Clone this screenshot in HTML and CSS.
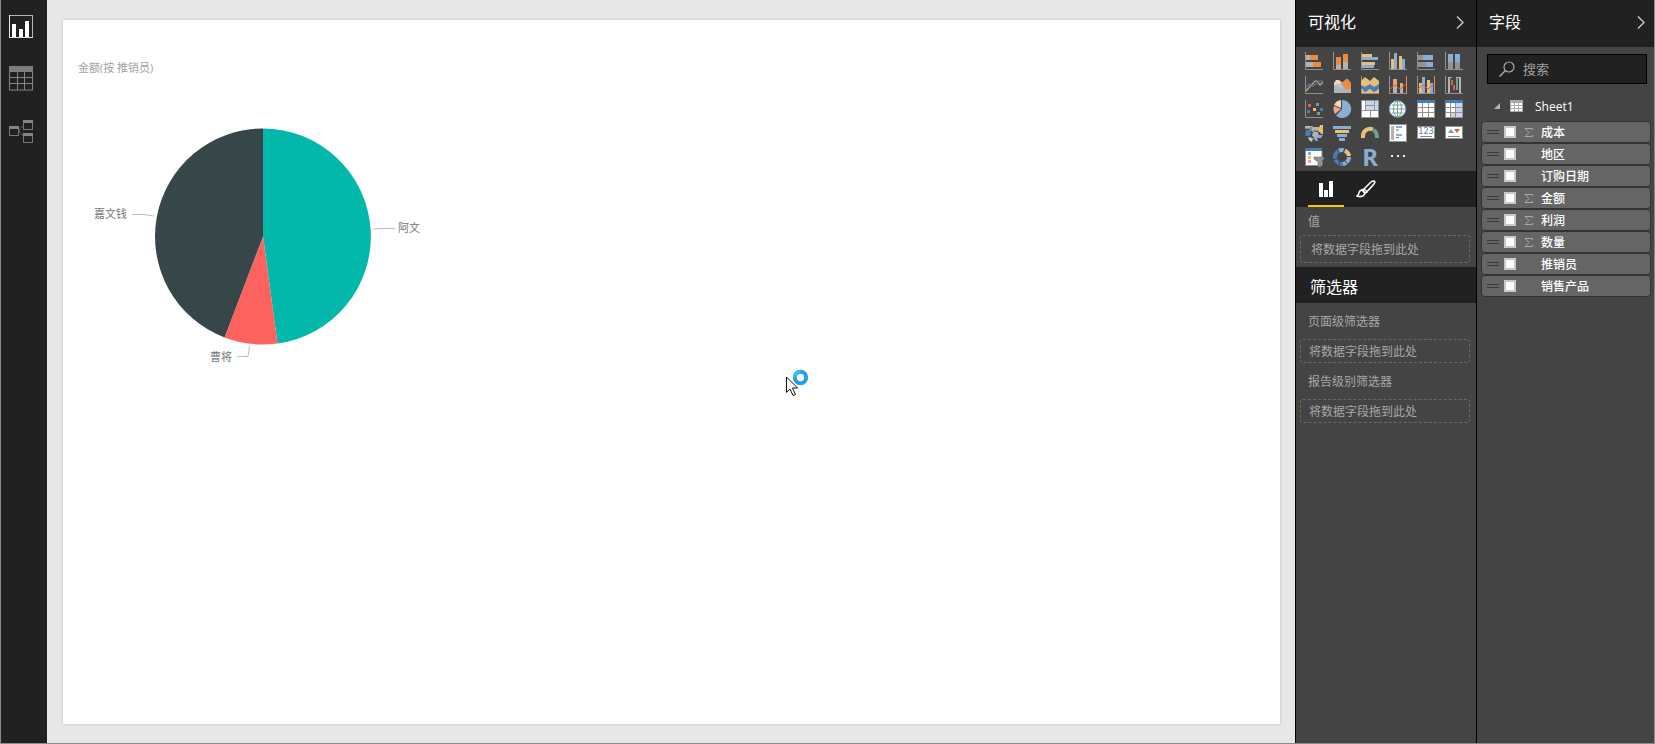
FILE: index.html
```html
<!DOCTYPE html>
<html lang="zh-CN">
<head>
<meta charset="utf-8">
<title>Sheet1</title>
<link rel="stylesheet" href="styles.css">
</head>
<body>
<div class="app">
  <nav class="rail">
    <button class="rail-btn" aria-label="报表"><svg width="24" height="24" viewBox="0 0 24 24"><rect x="0.5" y="1.500" width="23" height="22" fill="none" stroke="#b4b4b4"/><path d="M.5 1V23.500H24" fill="none" stroke="#e6e6e6"/><path d="M3 10h4v13H3zM10 15h4v8h-4zM16 7h4v16h-4z" fill="#fff"/></svg></button>
    <button class="rail-btn" aria-label="数据"><svg width="24" height="26" viewBox="0 0 24 26"><path d="M0 1h24v6H0z" fill="#7d7d7d"/><path d="M.5 7v18M8.500 7v18M15.500 7v18M23.500 7v18M0 12.500h24M0 18.500h24M0 25h24" stroke="#858585" fill="none"/></svg></button>
    <button class="rail-btn" aria-label="关系"><svg width="24" height="26" viewBox="0 -1 24 26"><g fill="none" stroke="#777"><rect x=".5" y="7.500" width="9" height="9"/><rect x="14.500" y="1.500" width="9" height="9"/><rect x="14.500" y="14.500" width="9" height="9"/><path d="M10 11l4-4M10 12l4 5" stroke-dasharray="2 1"/></g><path d="M0 7h10v3H0zM14 1h10v3H14zM14 14h10v3H14z" fill="#858585"/></svg></button>
  </nav>

  <main class="canvas">
    <section class="page">
      <h1 class="visual-title">金额(按 推销员)</h1>
      <svg class="pie" width="360" height="270" viewBox="0 0 360 270">
        <path d="M185 136.500V28.500A108 108 0 0 1 199.500 243.500Z" fill="#01b8aa"/>
        <path d="M185 136.500L199.500 243.500A108 108 0 0 1 146.500 237.400Z" fill="#fd625e"/>
        <path d="M185 136.500L146.500 237.400A108 108 0 0 1 185 28.500Z" fill="#374649"/>
        <path d="M54 114.500H66L76 116M295 129L305 128.500H317M171.500 246L170 256.500H159" fill="none" stroke="#bdbdbd"/>
        <text x="16" y="118">嘉文钱</text>
        <text x="320" y="132">阿文</text>
        <text x="132" y="261">曹将</text>
      </svg>
    </section>
    <svg class="cursor" width="26" height="32" viewBox="0 0 26 32"><circle cx="15.500" cy="10.500" r="5.700" fill="none" stroke="#249cf2" stroke-width="4"/><path d="M9.800 10.500A5.700 5.700 0 0 1 15.500 4.800" fill="none" stroke="#35b8fa" stroke-width="4"/><path d="M1.500 10v15.500l3.500-3.500 3 6.500 2.500-1-3-6.500h5z" fill="#fff" stroke="#111"/></svg>
  </main>

  <aside class="panel viz">
    <header class="panel-head"><h2>可视化</h2><button class="chev" aria-label="折叠"><svg width="8" height="14" viewBox="0 0 8 14"><path d="M1 1.500L7 7.500L1 13.500" fill="none" stroke="#d0d0d0" stroke-width="1.300"/></svg></button></header>
    <div class="gallery">
      <button aria-label="堆积条形图"><svg viewBox="0 0 18 18"><path d="M.5 0v17.500H18" class="axis"/><path d="M1 3h4v5H1zM1 10h7v5H1z" fill="#b3b3b3"/><path d="M5 3h8v5H5zM8 10h8v5H8z" fill="#e98c41"/></svg></button>
      <button aria-label="堆积柱形图"><svg viewBox="0 0 18 18"><path d="M.5 0v17.500H18" class="axis"/><path d="M3 13h5v4H3zM10 10h5v7h-5z" fill="#b3b3b3"/><path d="M3 5h5v8H3zM10 2h5v8h-5z" fill="#e98c41"/></svg></button>
      <button aria-label="簇状条形图"><svg viewBox="0 0 18 18"><path d="M.5 0v17.500H18" class="axis"/><path d="M1 2h10v3H1zM1 10h13v3H1z" fill="#e9bf78"/><path d="M1 5h16v3H1zM1 13h12v3H1z" fill="#8badd3"/></svg></button>
      <button aria-label="簇状柱形图"><svg viewBox="0 0 18 18"><path d="M.5 0v17.500H18" class="axis"/><path d="M2 7h3v10H2zM10 4h3v13h-3z" fill="#e9bf78"/><path d="M5 1h3v16H5zM13 7h3v10h-3z" fill="#8badd3"/></svg></button>
      <button aria-label="百分比堆积条形图"><svg viewBox="0 0 18 18"><path d="M.5 0v17.500H18" class="axis"/><path d="M1 3h5v5H1zM1 10h8v5H1z" fill="#929292"/><path d="M6 3h10v5H6zM9 10h7v5H9z" fill="#8badd3"/></svg></button>
      <button aria-label="百分比堆积柱形图"><svg viewBox="0 0 18 18"><path d="M.5 0v17.500H18" class="axis"/><path d="M3 10h5v7H3zM10 10h5v7h-5z" fill="#929292"/><path d="M3 2h5v8H3zM10 2h5v8h-5z" fill="#8badd3"/></svg></button>

      <button aria-label="折线图"><svg viewBox="0 0 18 18"><path d="M.5 0v17.500H18" class="axis"/><path d="M1 15L10 5h2l3 4 3-3" fill="none" stroke="#d9a184" stroke-width="1.200"/><path d="M1 11l3-3 4 2 3-2 3-3h4" fill="none" stroke="#4a7db8" stroke-width="1.200"/></svg></button>
      <button aria-label="分区图"><svg viewBox="0 0 18 18"><path d="M1 7l2-3h3l5 4v6H1z" fill="#f3d8b8"/><path d="M7 8l5-4 1-1h2l3 4v7H8z" fill="#e98c41"/><path d="M1 9l4-1 5 3 3 2h5v4H1z" fill="#b3b3b3"/><path d="M1 10l4-2h3l3 3-4 1z" fill="#a8c8dd"/></svg></button>
      <button aria-label="堆积面积图"><svg viewBox="0 0 18 18"><path d="M.5 0v17.500H18" class="axis"/><path d="M0 5l4-4 5 4 4-4 5 4v9H0z" fill="#e9bf78"/><path d="M0 9l4 2 5-3 4 3 5-3v5l-5 3-4-3-5 3-4-3z" fill="#4a7db8"/><path d="M1 13l3 3 5-3 4 3 5-3v4H1z" fill="#e9bf78"/></svg></button>
      <button aria-label="折线和堆积柱形图"><svg viewBox="0 0 18 18"><path d="M.5 0v17.500H18" class="axis"/><path d="M4 10h4v7H4zM11 12h3v5h-3z" fill="#b3b3b3"/><path d="M4 3h4v7H4zM11 7h3v5h-3z" fill="#e9a56a"/><path d="M17.500 0v17" stroke="#e98c41"/><path d="M1 13l5-4 5 4 6-5" fill="none" stroke="#d8624a"/></svg></button>
      <button aria-label="折线和簇状柱形图"><svg viewBox="0 0 18 18"><path d="M.5 0v17.500H18" class="axis"/><path d="M2 7h3v10H2zM10 4h3v13h-3z" fill="#e9bf78"/><path d="M5 1h3v16H5zM13 7h3v10h-3z" fill="#8badd3"/><path d="M17.500 0v17" stroke="#e98c41"/><path d="M1 13l5-4 5 4 6-5" fill="none" stroke="#d8624a"/></svg></button>
      <button aria-label="瀑布图"><svg viewBox="0 0 18 18"><path d="M.5 0v17.500H18" class="axis"/><path d="M3 1h2v16H3zM14 1h2v16h-2z" fill="#b3b3b3"/><path d="M3 1.500h4M11 1.500h4" stroke="#b3b3b3"/><path d="M6 4h2v5H6zM8 9h2v5H8z" fill="#d8624a"/><path d="M11 2h2v12h-2z" fill="#6f9f8f"/></svg></button>

      <button aria-label="散点图"><svg viewBox="0 0 18 18"><path d="M.5 0v17.500H18" class="axis"/><path d="M3 4h3v3H3z" fill="#d8624a"/><path d="M11 3h3v3h-3z" fill="#6f9f8f"/><path d="M2 10h3v3H2zM15 8h3v3h-3z" fill="#4a7db8"/><path d="M8 8h3v3H8z" fill="#e9bf78"/><path d="M12 12h3v3h-3z" fill="#929292"/></svg></button>
      <button aria-label="饼图"><svg viewBox="0 0 18 18"><path d="M9 9V0a9 9 0 1 1-6 15.500z" fill="#8badd3"/><path d="M8 8V0a9 9 0 0 0-7 5z" fill="#f3d8b8"/><path d="M8 9L1 6a9 9 0 0 0 1 8z" fill="#eda795"/></svg></button>
      <button aria-label="树状图"><svg viewBox="0 0 18 18"><rect x=".5" y=".5" width="17" height="17" fill="#fff" stroke="#929292"/><path d="M5 1h8v4H5zM14 1h3v9h-3zM5 6h8v4H5z" fill="#c8d6e9"/><path d="M4.500 1v10M13.500 1v10M5 5.500h9M1 10.500h16M9.500 11v6" stroke="#929292"/></svg></button>
      <button aria-label="地图"><svg viewBox="0 0 18 18"><circle cx="8.500" cy="9" r="8.300" fill="#fff" stroke="#5f9bc8"/><g fill="none" stroke="#76a394"><ellipse cx="8.500" cy="9" rx="4" ry="8"/><path d="M8.500 1v16M1 9h15M3 5h11M3 13h11"/></g></svg></button>
      <button aria-label="表"><svg viewBox="0 0 18 18"><path d="M0 0h18v18H0z" fill="#929292"/><path d="M0 0h18v3H0z" fill="#4a7db8"/><path d="M1 3h4v4H1zM6 3h5v4H6zM12 3h5v4h-5zM1 8h4v4H1zM6 8h5v4H6zM12 8h5v4h-5zM1 13h4v4H1zM6 13h5v4H6zM12 13h5v4h-5z" fill="#fff"/></svg></button>
      <button aria-label="矩阵"><svg viewBox="0 0 18 18"><path d="M0 0h18v18H0z" fill="#929292"/><path d="M0 0h18v3H0z" fill="#4a7db8"/><path d="M1 3h4v4H1zM6 3h4v4H6zM1 8h4v4H1zM6 8h4v4H6zM1 13h4v4H1z" fill="#fff"/><path d="M11 3h6v4h-6zM11 8h6v4h-6zM6 13h4v4H6zM11 13h6v4h-6z" fill="#c8d6e9"/></svg></button>

      <button aria-label="着色地图"><svg viewBox="0 0 18 18"><path d="M0 2h7l1 1h6v4l-5 1-4-1-1-2H0z" fill="#b3b3b3"/><path d="M15 1h3v9h-2l-1-2h-2l1-4z" fill="#e9bf78"/><path d="M1 6h4l2 4-3 2H0z" fill="#4a7db8"/><path d="M8 8h5l1 4-3 2-4-2z" fill="#b3b3b3"/><path d="M14 11h4l-2 3h-4l1 3h-2l-3-3z" fill="#8badd3"/><path d="M3 13l5 1-1 4-3-2z" fill="#c5c5c5"/><path d="M0 5h5M6 3v9M8 7h6" stroke="#444" stroke-width=".7"/></svg></button>
      <button aria-label="漏斗图"><svg viewBox="0 0 18 18"><path d="M0 2h18v3H0zM4 10h10v3H4zM6 14h6v3H6z" fill="#8badd3"/><path d="M2 6h14v3H2z" fill="#e9bf78"/></svg></button>
      <button aria-label="仪表"><svg viewBox="0 0 18 18"><path d="M2 14v-2a7 7 0 0 1 10-6.500" fill="none" stroke="#e9bf78" stroke-width="4"/><path d="M12.500 6q3.500 2 3.500 8" fill="none" stroke="#6f9f8f" stroke-width="4"/></svg></button>
      <button aria-label="多行卡"><svg viewBox="0 0 18 18"><rect x=".5" y=".5" width="17" height="17" fill="#fff" stroke="#929292"/><path d="M2 2h3v14H2z" fill="#b3b3b3"/><path d="M7 2h6v2H7zM7 10h6v2H7z" fill="#8badd3"/><path d="M7 6h3M7 13.500h3" stroke="#4a7db8"/></svg></button>
      <button aria-label="卡片图"><svg viewBox="0 0 18 18"><rect x=".5" y="2.500" width="17" height="12" fill="#fff" stroke="#929292"/><text x="9" y="10" class="num">123</text><path d="M3 12.500h12" stroke="#888"/></svg></button>
      <button aria-label="KPI"><svg viewBox="0 0 18 18"><rect x=".5" y="2.500" width="17" height="12" fill="#fff" stroke="#929292"/><path d="M3 9l3-4 3 4z" fill="#6f9f8f"/><path d="M9 5h6l-3 4z" fill="#d8624a"/><path d="M3 12.500h12" stroke="#888"/></svg></button>

      <button aria-label="切片器"><svg class="wide" viewBox="0 0 20 19"><path d="M.5 3v14.500H17V3" fill="#fff" stroke="#929292"/><path d="M0 0h17v3H0z" fill="#4a7db8"/><path d="M3 4h3v3H3z" fill="#8badd3"/><path d="M3 8h3v3H3z" fill="#e9bf78"/><path d="M3 12h3v3H3z" fill="#eda795"/><path d="M9 9h10v2l-3 3v5h-3v-5l-4-3z" fill="#929292" stroke="#555" stroke-width=".5"/></svg></button>
      <button aria-label="圆环图"><svg viewBox="0 0 18 18"><g fill="none" stroke-width="4"><circle cx="9" cy="9" r="7" stroke="#4a7db8"/><path d="M12 2.700A7 7 0 0 1 16 8" stroke="#e9bf78"/><path d="M5.500 3A7 7 0 0 1 11 2.300" stroke="#8badd3"/><path d="M16 9A7 7 0 0 1 10 15.900" stroke="#8badd3"/></g><path d="M4 0l3 6M12 0l-2 5M18 8.500h-6M15 16l-4-4M6 17l1-5M0 12l6-2" stroke="#444"/></svg></button>
      <button aria-label="R 脚本视觉对象"><svg viewBox="0 0 18 18"><text x="9" y="18" class="r-mark">R</text></svg></button>
      <button aria-label="更多"><svg viewBox="0 0 18 18"><path d="M2 7h2v2H2zM8 7h2v2H8zM14 7h2v2h-2z" fill="#eee"/></svg></button>
    </div>
    <div class="tabs">
      <button class="tab active" aria-label="字段"><svg width="14" height="16" viewBox="0 0 14 16"><path d="M0 2h4v14H0zM5 9h4v7H5zM10 0h4v16h-4z" fill="#fff"/></svg></button>
      <button class="tab" aria-label="格式"><svg width="20" height="18" viewBox="0 0 20 18"><path d="M8 9L15 2q3-2 4 0-.500 2-8 9.500zM8 9l3 3-2 1-3-3z" fill="none" stroke="#fff" stroke-width="1.500"/><path d="M7 10.500q-3-1-4 2 0 2-2 3.500 6 2 8-2.500z" fill="none" stroke="#fff" stroke-width="1.500"/></svg></button>
    </div>
    <section class="well values"><h3>值</h3><div class="drop">将数据字段拖到此处</div></section>
    <header class="filter-head"><h2>筛选器</h2></header>
    <section class="well"><h3>页面级筛选器</h3><div class="drop">将数据字段拖到此处</div></section>
    <section class="well"><h3>报告级别筛选器</h3><div class="drop">将数据字段拖到此处</div></section>
  </aside>

  <aside class="panel fields">
    <header class="panel-head"><h2>字段</h2><button class="chev" aria-label="折叠"><svg width="8" height="14" viewBox="0 0 8 14"><path d="M1 1.500L7 7.500L1 13.500" fill="none" stroke="#d0d0d0" stroke-width="1.300"/></svg></button></header>
    <label class="search"><svg width="16" height="16" viewBox="0 0 16 16"><circle cx="10" cy="6" r="5" fill="none" stroke="#aaa" stroke-width="1.200"/><path d="M6.500 9.500L.5 15.500" stroke="#aaa" stroke-width="1.400"/></svg><input type="text" placeholder="搜索" aria-label="搜索"></label>
    <div class="table-row"><svg width="6" height="6" viewBox="0 0 6 6"><path d="M6 0v6H0z" fill="#b3b3b3"/></svg><svg class="table-icon" width="13" height="12" viewBox="0 0 13 12"><path d="M0 0h13v12H0z" fill="#aaa"/><path d="M1 3h3v2H1zM5 3h3v2H5zM9 3h3v2H9zM1 6h3v2H1zM5 6h3v2H5zM9 6h3v2H9zM1 9h3v2H1zM5 9h3v2H5zM9 9h3v2H9z" fill="#fff"/></svg><span>Sheet1</span></div>
    <ul class="field-list">
      <li><label><i class="grip"></i><input type="checkbox"><span class="sigma"><svg width="9" height="9" viewBox="0 0 9 9"><path d="M8.500 2V.5H1L5 4.500 1 8.500H8.500V7" class="sum"/></svg></span>成本</label></li>
      <li><label><i class="grip"></i><input type="checkbox"><span class="sigma"></span>地区</label></li>
      <li><label><i class="grip"></i><input type="checkbox"><span class="sigma"></span>订购日期</label></li>
      <li><label><i class="grip"></i><input type="checkbox"><span class="sigma"><svg width="9" height="9" viewBox="0 0 9 9"><path d="M8.500 2V.5H1L5 4.500 1 8.500H8.500V7" class="sum"/></svg></span>金额</label></li>
      <li><label><i class="grip"></i><input type="checkbox"><span class="sigma"><svg width="9" height="9" viewBox="0 0 9 9"><path d="M8.500 2V.5H1L5 4.500 1 8.500H8.500V7" class="sum"/></svg></span>利润</label></li>
      <li><label><i class="grip"></i><input type="checkbox"><span class="sigma"><svg width="9" height="9" viewBox="0 0 9 9"><path d="M8.500 2V.5H1L5 4.500 1 8.500H8.500V7" class="sum"/></svg></span>数量</label></li>
      <li><label><i class="grip"></i><input type="checkbox"><span class="sigma"></span>推销员</label></li>
      <li><label><i class="grip"></i><input type="checkbox"><span class="sigma"></span>销售产品</label></li>
    </ul>
  </aside>
</div>
</body>
</html>
```

FILE: styles.css
```css
* { box-sizing: border-box; }
body {
  margin: 0;
  font-family: "Open Sans", "Noto Sans CJK SC", sans-serif;
  font-size: 12px;
  color: #fff;
}
h1, h2, h3, ul { margin: 0; padding: 0; font-weight: 400; }
button { border: 0; padding: 0; background: none; color: inherit; font: inherit; }
svg { display: block; }

.app {
  display: flex;
  min-height: 100vh;
  background: #e7e7e7;
  border: solid #8c8c8c;
  border-width: 0 1px 1px;
}

.rail {
  flex: none;
  width: 46px;
  padding: 14px 0 0 8px;
  background: #212121;
  display: flex;
  flex-direction: column;
  gap: 27px;
}
.rail-btn { width: 24px; }

.canvas {
  position: relative;
  flex: 1;
  display: flex;
  padding: 20px 15px 19px 16px;
}
.page {
  flex: 1;
  padding: 40px 15px;
  background: #fff;
  box-shadow: 0 0 3px #bbb;
}
.visual-title {
  height: 40px;
  font-size: 11px;
  line-height: 16px;
  color: #a3a3a3;
}
.pie text { font-size: 11px; fill: #777; }
.cursor { position: absolute; left: 738px; top: 367px; }

.panel { flex: none; background: #444; border-left: 1px solid #000; }
.viz { width: 181px; }
.fields { width: 178px; }
.panel-head {
  display: flex;
  align-items: center;
  justify-content: space-between;
  height: 47px;
  padding: 0 12px 3px;
  background: #212121;
}
.fields .panel-head { padding-right: 9px; }
h2 { font-size: 16px; line-height: 24px; }

.gallery {
  display: grid;
  grid-template-columns: repeat(6, 18px);
  gap: 6px 10px;
  padding: 5px 9px;
}
.gallery button { width: 18px; height: 18px; }
.gallery svg { width: 18px; height: 18px; overflow: visible; }
.gallery .wide { width: 20px; height: 19px; }
.axis { fill: none; stroke: #929292; }
.num { font: 400 8px "DejaVu Sans", sans-serif; text-anchor: middle; fill: #4a7db8; }
.r-mark { font: 700 24px "Noto Sans", sans-serif; text-anchor: middle; fill: #8badd3; }

.tabs { display: flex; gap: 4px; height: 36px; padding-left: 12px; background: #212121; }
.tab { width: 36px; padding-top: 2px; display: flex; align-items: center; justify-content: center; border-bottom: 2px solid transparent; }
.tab.active { border-color: #f2c80f; }

.well { padding: 8px 6px 0 4px; color: #a8a8a8; }
.well h3 { padding-left: 8px; font-size: 12px; line-height: 22px; }
.drop {
  margin-top: 6px;
  padding-left: 8px;
  height: 24px;
  line-height: 24px;
  border: 1px dashed #686868;
  border-radius: 3px;
}
.values { padding: 4px 6px 4px 4px; }
.values .drop { margin-top: 2px; height: 28px; line-height: 28px; padding-left: 10px; }
.filter-head { height: 36px; padding: 8px 14px 4px; background: #212121; }

.search {
  display: flex;
  align-items: center;
  gap: 8px;
  height: 30px;
  margin: 7px 7px 0 10px;
  padding-left: 11px;
  background: #212121;
  border: 1px solid #000;
}
.search input {
  flex: 1;
  min-width: 0;
  padding: 0;
  border: 0;
  background: none;
  font: inherit;
  font-size: 13px;
  color: #fff;
}
.search input::placeholder { color: #a0a0a0; opacity: 1; }

.table-row {
  display: flex;
  align-items: center;
  height: 20px;
  margin: 12px 0 5px;
  padding-left: 17px;
}
.table-icon { margin: 0 12px 0 10px; }

.field-list { list-style: none; padding: 0 3px 0 4px; }
.field-list li {
  height: 22px;
  background: #656565;
  border: 1px solid #333;
  border-radius: 4px;
}
.field-list label { display: flex; align-items: center; height: 20px; font-weight: 500; }
.grip { width: 12px; height: 4px; margin: 0 5px; border: solid #393939; border-width: 1px 0; }
.field-list input {
  appearance: none;
  width: 12px;
  height: 12px;
  margin: 0 8px 0 0;
  background: #fff;
  border: 2px solid #c8c8c8;
}
.sigma { width: 17px; }
.sum { fill: none; stroke: #aaa; }
```
